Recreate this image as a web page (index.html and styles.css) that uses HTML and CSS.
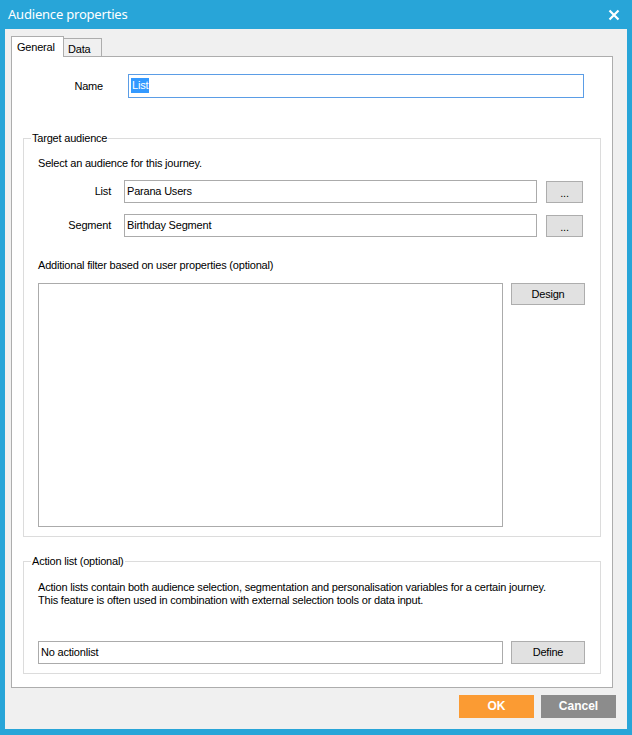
FILE: index.html
```html
<!DOCTYPE html>
<html>
<head>
<meta charset="utf-8">
<link rel="stylesheet" href="styles.css">
</head>
<body>
<div class="window">
  <div class="titlebar">
    <span class="title">Audience properties</span>
    <svg class="close" width="12" height="12" viewBox="0 0 12 12"><path d="M1.5 1.5 L10.5 10.5 M10.5 1.5 L1.5 10.5" stroke="#fff" stroke-width="2.2" fill="none"/></svg>
  </div>
  <div class="client">
    <div class="tabs">
      <div class="tab tab-active">General</div>
      <div class="tab tab-data">Data</div>
    </div>
    <div class="panel">
      <div class="name-row">
        <span class="name-label">Name</span>
        <div class="input name-input"><span class="sel">List</span></div>
      </div>

      <fieldset class="group target">
        <legend class="legend">Target audience</legend>
        <div class="hint">Select an audience for this journey.</div>
        <div class="field-row first-row">
          <span class="field-label">List</span>
          <div class="input field-input">Parana Users</div>
          <div class="btn btn-dots">...</div>
        </div>
        <div class="field-row second-row">
          <span class="field-label">Segment</span>
          <div class="input field-input">Birthday Segment</div>
          <div class="btn btn-dots">...</div>
        </div>
        <div class="hint filter-hint">Additional filter based on user properties (optional)</div>
        <div class="filter-row">
          <div class="input filter-box"></div>
          <div class="btn btn-wide">Design</div>
        </div>
      </fieldset>

      <fieldset class="group action">
        <legend class="legend">Action list (optional)</legend>
        <div class="desc">Action lists contain both audience selection, segmentation and personalisation variables for a certain journey.<br>This feature is often used in combination with external selection tools or data input.</div>
        <div class="action-row">
          <div class="input action-input">No actionlist</div>
          <div class="btn btn-wide btn-define">Define</div>
        </div>
      </fieldset>
    </div>
    <div class="footer">
      <div class="fbtn fbtn-ok">OK</div>
      <div class="fbtn fbtn-cancel">Cancel</div>
    </div>
  </div>
</div>
</body>
</html>
```

FILE: styles.css
```css
html, body {
  margin: 0;
  padding: 0;
}
body {
  width: 632px;
  height: 735px;
  background: #28a5d8;
  font-family: "Liberation Sans", Arial, sans-serif;
  font-size: 11px;
  letter-spacing: -0.2px;
  color: #000;
  overflow: hidden;
}
.window {
  width: 632px;
  height: 735px;
  display: flex;
  flex-direction: column;
}
.titlebar {
  height: 29px;
  display: flex;
  align-items: center;
  justify-content: space-between;
  padding: 0 12px 0 8px;
  flex: none;
}
.title {
  color: #fff;
  font-family: "Noto Sans", "Open Sans", sans-serif;
  font-size: 13px;
  letter-spacing: -0.2px;
  margin-top: -1px;
}
.close {
  display: block;
}
.client {
  flex: 1;
  margin: 0 5px 6px 5px;
  background: #f0f0f0;
  padding: 7px 0 0 6px;
  display: flex;
  flex-direction: column;
}
.tabs {
  display: flex;
  align-items: flex-end;
  height: 20px;
  position: relative;
  z-index: 1;
}
.tab {
  box-sizing: border-box;
  border: 1px solid #adadad;
  border-bottom: none;
  line-height: 16px;
}
.tab-active {
  width: 53px;
  height: 21px;
  margin-bottom: -1px;
  background: #fff;
  padding-left: 5px;
  padding-top: 2px;
}
.tab-data {
  width: 38px;
  height: 18px;
  border-left: none;
  background: #f0f0f0;
  padding-left: 4px;
  padding-top: 2px;
}
.panel {
  box-sizing: border-box;
  width: 602px;
  height: 632px;
  border: 1px solid #adadad;
  background: #fff;
  display: flex;
  flex-direction: column;
}
.name-row {
  display: flex;
  align-items: center;
  margin-top: 17px;
}
.name-label {
  width: 91px;
  text-align: right;
  margin-right: 25px;
}
.input {
  box-sizing: border-box;
  border: 1px solid #ababab;
  background: #fff;
  line-height: 14px;
}
.name-input {
  width: 456px;
  height: 24px;
  border-color: #5b9de6;
  padding: 3px 2px;
}
.sel {
  background: #3399ff;
  color: #fff;
  padding: 0 1px;
  display: inline-block;
  line-height: 15px;
}
.group {
  margin: 0;
  padding: 0;
  border: 1px solid #dcdcdc;
  width: 578px;
  box-sizing: border-box;
  min-width: 0;
}
.target {
  margin: 34px 0 0 11px;
  padding-bottom: 9px;
}
.action {
  margin: 18px 0 0 11px;
  padding-bottom: 9px;
}
.legend {
  padding: 0 1px;
  margin-left: 7px;
  line-height: 13px;
}
.hint {
  line-height: 13px;
  margin: 12px 0 0 14px;
}
.filter-hint {
  margin-top: 22px;
}
.field-row {
  display: flex;
  align-items: flex-start;
  margin-top: 10px;
}
.second-row {
  margin-top: 11px;
}
.field-label {
  width: 87px;
  text-align: right;
  margin-right: 13px;
  line-height: 23px;
}
.field-input {
  width: 413px;
  height: 23px;
  padding: 3px 2px;
}
.btn {
  box-sizing: border-box;
  border: 1px solid #adadad;
  background: #e1e1e1;
  text-align: center;
}
.btn-dots {
  width: 37px;
  height: 22px;
  margin-left: 9px;
  margin-top: 1px;
  line-height: 22px;
}
.filter-row {
  display: flex;
  align-items: flex-start;
  margin: 11px 0 0 14px;
}
.filter-box {
  width: 465px;
  height: 244px;
}
.btn-wide {
  width: 74px;
  height: 22px;
  margin-left: 8px;
  line-height: 20px;
}
.btn-define {
  height: 23px;
  line-height: 21px;
}
.desc {
  line-height: 13px;
  margin: 13px 0 0 14px;
}
.action-row {
  display: flex;
  align-items: flex-start;
  margin: 34px 0 0 14px;
}
.action-input {
  width: 465px;
  height: 23px;
  padding: 3px 2px;
}
.footer {
  display: flex;
  justify-content: flex-end;
  gap: 7px;
  margin-top: 7px;
  padding-right: 11px;
}
.fbtn {
  width: 75px;
  height: 23px;
  line-height: 23px;
  text-align: center;
  color: #fff;
  font-weight: bold;
  font-size: 12px;
  letter-spacing: 0;
}
.fbtn-ok {
  background: #fb9b33;
}
.fbtn-cancel {
  background: #8c8c8c;
}
```
